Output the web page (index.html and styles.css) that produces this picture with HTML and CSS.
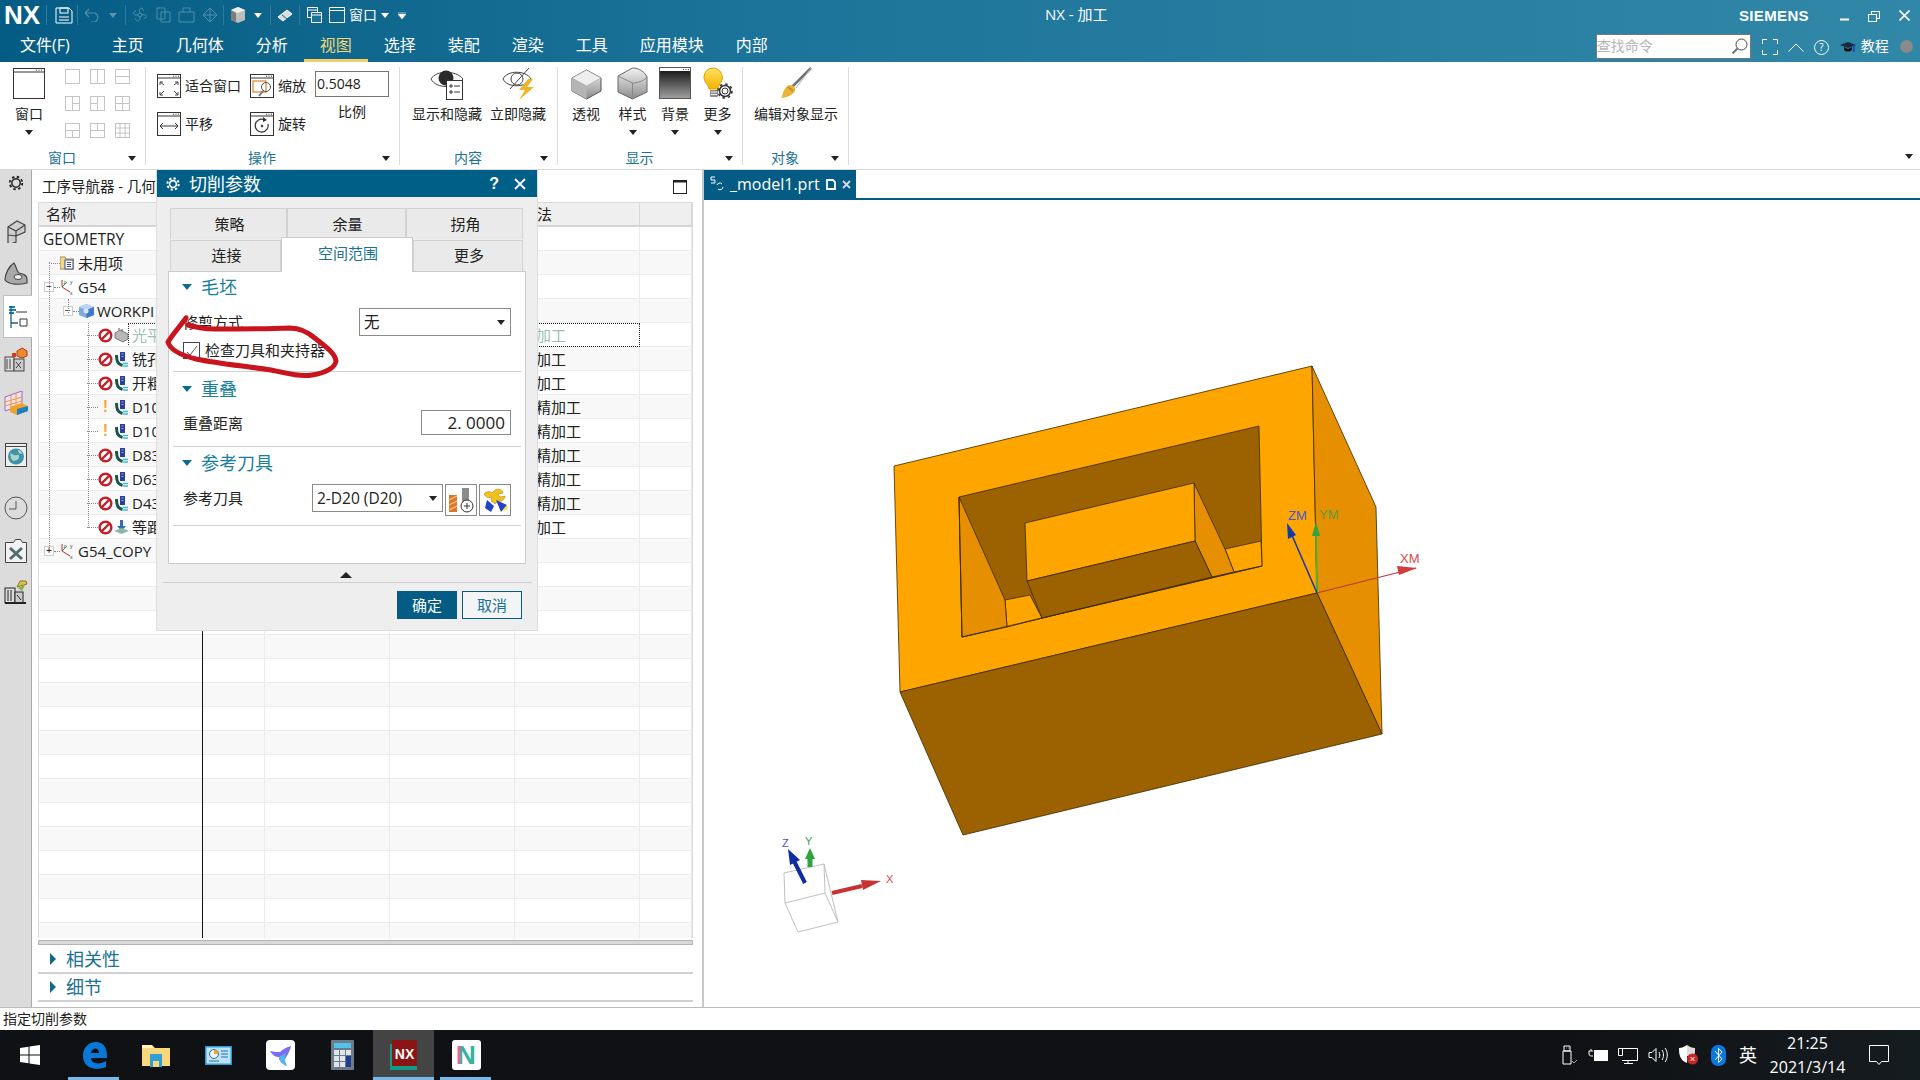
FILE: index.html
```html
<!DOCTYPE html>
<html lang="zh">
<head>
<meta charset="utf-8">
<title>NX - 加工</title>
<link rel="stylesheet" href="styles.css">
</head>
<body>
<svg class="defs" width="0" height="0" aria-hidden="true">
  <defs>
    <linearGradient id="gCube" x1="0" y1="0" x2="0" y2="1"><stop offset="0" stop-color="#f2f2f2"/><stop offset="1" stop-color="#8c8c8c"/></linearGradient>
    <linearGradient id="gBg" x1="0" y1="0" x2="0" y2="1"><stop offset="0" stop-color="#0b0b0b"/><stop offset="1" stop-color="#a0a0a0"/></linearGradient>
    <linearGradient id="gBulb" x1="0" y1="0" x2="0" y2="1"><stop offset="0" stop-color="#ffe060"/><stop offset="1" stop-color="#f5b400"/></linearGradient>
    <symbol id="frame" viewBox="0 0 24 24"><rect x=".5" y=".5" width="23" height="23" fill="#fff" stroke="#333"/><path d="M1 4h22" stroke="#333"/><path d="M16 2.2h1M18.500 2.200h1M21 2.200h1" stroke="#333"/></symbol>
    <symbol id="fit" viewBox="0 0 24 24"><use href="#frame"/><path d="M3 8l4 3M3 8v3M3 8h3M21 8l-4 3M21 8v3M21 8h-3M3 21l4-4M3 21v-3M3 21h3M21 21l-4-4M21 21v-3M21 21h-3" fill="none" stroke="#444"/></symbol>
    <symbol id="pan" viewBox="0 0 24 24"><use href="#frame"/><path d="M3 14h18M6 11l-3 3 3 3M18 11l3 3-3 3" fill="none" stroke="#333"/></symbol>
    <symbol id="zoomi" viewBox="0 0 24 24"><use href="#frame"/><rect x="3" y="7" width="13" height="11" fill="none" stroke="#d9822b" stroke-width="1.200"/><circle cx="16" cy="13" r="4.500" fill="none" stroke="#555"/><path d="M13 17l-4 5" stroke="#777" stroke-width="2"/></symbol>
    <symbol id="rot" viewBox="0 0 24 24"><use href="#frame"/><path d="M14 7.500A6.500 6.500 0 1 0 18 12" fill="none" stroke="#333" stroke-width="1.200"/><path d="M13 5l4 3-4 2z" fill="#333"/><circle cx="12" cy="14" r="1.200" fill="#333"/></symbol>
    <symbol id="s1" viewBox="0 0 15 15"><rect x=".5" y=".5" width="14" height="14" fill="none" stroke="#c4c4c4"/></symbol>
    <symbol id="s2" viewBox="0 0 15 15"><rect x=".5" y=".5" width="14" height="14" fill="none" stroke="#c4c4c4"/><path d="M7.500 0v15" stroke="#c4c4c4"/></symbol>
    <symbol id="s3" viewBox="0 0 15 15"><rect x=".5" y=".5" width="14" height="14" fill="none" stroke="#c4c4c4"/><path d="M0 7.500h15" stroke="#c4c4c4"/></symbol>
    <symbol id="s4" viewBox="0 0 15 15"><rect x=".5" y=".5" width="14" height="14" fill="none" stroke="#c4c4c4"/><path d="M7.500 0v15M7.500 7.500h7.500" stroke="#c4c4c4"/></symbol>
    <symbol id="s5" viewBox="0 0 15 15"><rect x=".5" y=".5" width="14" height="14" fill="none" stroke="#c4c4c4"/><path d="M7.500 0v15M0 7.500h7.500" stroke="#c4c4c4"/></symbol>
    <symbol id="s6" viewBox="0 0 15 15"><rect x=".5" y=".5" width="14" height="14" fill="none" stroke="#c4c4c4"/><path d="M7.500 0v15M0 7.500h15" stroke="#c4c4c4"/></symbol>
    <symbol id="s7" viewBox="0 0 15 15"><rect x=".5" y=".5" width="14" height="14" fill="none" stroke="#c4c4c4"/><path d="M7.500 7.500v7.500M0 7.500h15" stroke="#c4c4c4"/></symbol>
    <symbol id="s8" viewBox="0 0 15 15"><rect x=".5" y=".5" width="14" height="14" fill="none" stroke="#c4c4c4"/><path d="M7.500 0v7.500M0 7.500h15" stroke="#c4c4c4"/></symbol>
    <symbol id="s9" viewBox="0 0 15 15"><rect x=".5" y=".5" width="14" height="14" fill="none" stroke="#c4c4c4"/><path d="M5 0v15M10 0v15M0 5h15M0 10h15" stroke="#c4c4c4"/></symbol>
    <symbol id="ban" viewBox="0 0 15 15"><circle cx="7.500" cy="7.500" r="5.800" fill="#fff" stroke="#c02028" stroke-width="2.400"/><path d="M3.500 11.500l8-8" stroke="#c02028" stroke-width="2.400"/></symbol>
    <symbol id="op" viewBox="0 0 15 15"><path d="M2.500 3c0 6 1 9 6 10.500" fill="none" stroke="#17564f" stroke-width="3"/><rect x="6" y="0" width="5" height="9" fill="#2b3f9f"/><path d="M7.500 2h2M7.500 4.500h2" stroke="#8fa3e6"/><path d="M9 11.500h5M9 14h5" stroke="#3fb9d8" stroke-width="1.300"/></symbol>
    <symbol id="mcs" viewBox="0 0 14 16"><path d="M2 1v7l8 5" fill="none" stroke="#c62828"/><path d="M2 8l5-5" stroke="#2e9e44"/><text x="3.500" y="5" font-size="5" fill="#333">z</text><text x="10" y="5" font-size="5" fill="#333">y</text><text x="10" y="15.500" font-size="5" fill="#333">x</text></symbol>
  </defs>
</svg>

<div class="top">
  <div class="titlebar">
    <span class="logo">NX</span>
    <span class="qsep q1"></span>
    <svg class="q ql1" width="18" height="17" viewBox="0 0 18 17"><path d="M1 1h13l3 3v12H1z" fill="none" stroke="#fff"/><rect x="5" y="1" width="8" height="5" fill="none" stroke="#fff"/><path d="M4 10h10M4 13h10" stroke="#fff"/></svg>
    <span class="qsep"></span>
    <svg class="q ql2" width="17" height="14" viewBox="0 0 17 14"><path d="M1 5h10a5 5 0 0 1 0 9H7M1 5l4-4M1 5l4 4" fill="none" stroke="#4f8fa9" stroke-width="1.200"/></svg>
    <span class="dimcaret"></span>
    <span class="qsep"></span>
    <svg class="q ql3" width="16" height="16" viewBox="0 0 16 16"><circle cx="8" cy="8" r="2" fill="none" stroke="#4f8fa9"/><path d="M8 6c-3-5 4-7 3-2M10 8c5-2 6 4 2 3M8 10c1 5-6 5-4 1M6 8C1 9 0 4 4 4" fill="none" stroke="#4f8fa9"/></svg>
    <svg class="q ql4" width="15" height="16" viewBox="0 0 15 16"><path d="M1 1h8v11H1zM5 5h9v10H5z" fill="none" stroke="#4f8fa9"/></svg>
    <svg class="q ql5" width="17" height="16" viewBox="0 0 17 16"><path d="M1 5h15v10H1zM5 5V1h7v4" fill="none" stroke="#4f8fa9"/></svg>
    <svg class="q ql5" width="16" height="16" viewBox="0 0 16 16"><path d="M1 8l7-7 7 7-7 7zM8 1v14M1 8h14" fill="none" stroke="#4f8fa9"/></svg>
    <span class="qsep q4"></span>
    <svg class="q ql6" width="16" height="16" viewBox="0 0 16 16"><path d="M1 3l7-3 7 3v10l-7 3-7-3z" fill="#bdbdbd"/><path d="M1 3l7 3 7-3-7-3z" fill="#eee"/><path d="M1 3v10l5 2.500V6z" fill="#7d7d7d"/></svg>
    <span class="wcaret c1"></span>
    <span class="qsep q5"></span>
    <svg class="q ql7" width="16" height="14" viewBox="0 0 16 14"><path d="M1 9l9-7 5 4-9 7z" fill="#d8dfe4" stroke="#fff"/><path d="M5 7l5 4" stroke="#1f5f7f"/></svg>
    <span class="qsep q6"></span>
    <svg class="q ql8" width="15" height="16" viewBox="0 0 15 16"><path d="M.5 .5h10v10H.5zM.5 3h10" fill="none" stroke="#fff"/><path d="M4.500 5.500h10v10h-10zM4.500 8h10" fill="#17739a" stroke="#fff"/></svg>
    <svg class="q ql9" width="16" height="16" viewBox="0 0 16 16"><path d="M.5 .5h15v15H.5zM.5 3.500h15" fill="none" stroke="#fff"/></svg>
    <span class="qtext">窗口</span>
    <span class="wcaret c2"></span>
    <svg class="q ql10" width="8" height="7" viewBox="0 0 8 7"><path d="M0 0h8M0 2h8L4 7z" fill="#fff" stroke="#fff" stroke-width=".6"/></svg>
    <span class="wintitle">NX - 加工</span>
    <span class="siemens">SIEMENS</span>
    <svg class="wctl w1" width="9" height="3" viewBox="0 0 9 3"><path d="M0 1.500h9" stroke="#fff" stroke-width="2"/></svg>
    <svg class="wctl w2" width="12" height="11" viewBox="0 0 12 11"><path d="M.5 3.500h8v7h-8zM3.500 3V.5h8v7H9" fill="none" stroke="#fff" stroke-width="1.100"/></svg>
    <svg class="wctl w3" width="11" height="11" viewBox="0 0 11 11"><path d="M.5 .5l10 10M10.500 .5l-10 10" stroke="#fff" stroke-width="1.600"/></svg>
  </div>
  <div class="menubar">
    <span class="menu first">文件(F)</span>
    <span class="menu">主页</span>
    <span class="menu">几何体</span>
    <span class="menu">分析</span>
    <span class="menu on">视图</span>
    <span class="menu">选择</span>
    <span class="menu">装配</span>
    <span class="menu">渲染</span>
    <span class="menu">工具</span>
    <span class="menu">应用模块</span>
    <span class="menu">内部</span>
    <div class="search"><span>查找命令</span>
      <svg width="17" height="17" viewBox="0 0 17 17"><circle cx="10.500" cy="6.500" r="5.500" fill="none" stroke="#444"/><path d="M6.500 10.500L1.500 15.500" stroke="#777" stroke-width="2.200"/></svg>
    </div>
    <svg class="mi m1" width="16" height="16" viewBox="0 0 16 16"><path d="M.5 5V.5H5M11 .5h4.500V5M.5 11v4.500H5M11 15.500h4.500V11" fill="none" stroke="#fff"/></svg>
    <svg class="mi m2" width="16" height="9" viewBox="0 0 16 9"><path d="M.5 8.500L8 1l7.500 7.500" fill="none" stroke="#fff"/></svg>
    <svg class="mi m3" width="15" height="15" viewBox="0 0 15 15"><circle cx="7.500" cy="7.500" r="7" fill="none" stroke="#fff"/><text x="7.500" y="11" font-size="10" text-anchor="middle" fill="#fff">?</text></svg>
    <svg class="mi m4" width="16" height="11" viewBox="0 0 16 11"><path d="M0 3l8-3 8 3-8 3z" fill="#1b2a36"/><path d="M4 5v3c2 2 6 2 8 0V5L8 7z" fill="#0c1218"/><path d="M14 3v7" stroke="#1440c8" stroke-width="1.600"/></svg>
    <span class="tut">教程</span>
    <span class="dot"></span>
  </div>
</div>

<div class="ribbon">
  <section class="group g1">
    <div class="gbody wins">
      <div class="big w32">
        <svg width="32" height="33" viewBox="0 0 32 33"><rect x=".5" y="1.500" width="31" height="30" fill="#fff" stroke="#333"/><path d="M1 5h30" stroke="#333"/><path d="M23 3.200h1M25.500 3.200h1M28 3.200h1" stroke="#333"/></svg>
        <span>窗口</span><i class="caret"></i>
      </div>
      <div class="layouts">
        <svg><use href="#s1"/></svg><svg><use href="#s2"/></svg><svg><use href="#s3"/></svg>
        <svg><use href="#s4"/></svg><svg><use href="#s5"/></svg><svg><use href="#s6"/></svg>
        <svg><use href="#s7"/></svg><svg><use href="#s8"/></svg><svg><use href="#s9"/></svg>
      </div>
    </div>
    <footer class="gfoot"><span>窗口</span><i class="caret"></i></footer>
  </section>
  <section class="group g2">
    <div class="gbody ops">
      <div class="opcol c93">
        <div class="tool"><svg><use href="#fit"/></svg><span>适合窗口</span></div>
        <div class="tool"><svg><use href="#pan"/></svg><span>平移</span></div>
      </div>
      <div class="opcol c65">
        <div class="tool"><svg><use href="#zoomi"/></svg><span>缩放</span></div>
        <div class="tool"><svg><use href="#rot"/></svg><span>旋转</span></div>
      </div>
      <div class="scale"><div class="scalebox">0.5048</div><span>比例</span></div>
    </div>
    <footer class="gfoot"><span>操作</span><i class="caret"></i></footer>
  </section>
  <section class="group g3">
    <div class="gbody content">
      <div class="big w70">
        <svg width="34" height="33" viewBox="0 0 34 33"><path d="M1 12C6 3 26 3 33 12 26 22 6 22 1 12z" fill="#fff" stroke="#444"/><circle cx="16" cy="11" r="7.500" fill="#2b2b2b"/><rect x="16.500" y="13.500" width="16" height="19" fill="#fff" stroke="#333"/><path d="M20 18h2v2h-2zM20 24h2v2h-2zM24 19h6M24 25h6" fill="none" stroke="#333"/></svg>
        <span>显示和隐藏</span>
      </div>
      <div class="big w56">
        <svg width="33" height="33" viewBox="0 0 33 33"><path d="M1 12C5 3 24 3 29 12 24 21 5 21 1 12z" fill="none" stroke="#444"/><circle cx="15" cy="12" r="6" fill="none" stroke="#444"/><path d="M8 22L27 1" stroke="#444"/><path d="M26 12l-9 11h6l-6 10 15-13h-7l6-8z" fill="#f0b323"/></svg>
        <span>立即隐藏</span>
      </div>
    </div>
    <footer class="gfoot"><span>内容</span><i class="caret"></i></footer>
  </section>
  <section class="group g4">
    <div class="gbody display">
      <div class="big w28">
        <svg width="31" height="33" viewBox="0 0 31 33"><path d="M15.500 3L30 11v13l-14.500 8L1 24V11z" fill="url(#gCube)" stroke="#555"/><path d="M15.500 3L30 11l-14.500 8L1 11z" fill="#eee" stroke="#999" stroke-width=".5"/><path d="M15.500 19v13L1 24V11z" fill="#b5b5b5"/></svg>
        <span>透视</span>
      </div>
      <div class="big w28 style">
        <svg width="31" height="33" viewBox="0 0 31 33"><path d="M15.500 1C22 1 28 5 30 10v15l-14.500 7L1 25V9z" fill="url(#gCube)" stroke="#666"/><path d="M1 9l14.500 7V32" fill="none" stroke="#888"/><path d="M15.500 16C22 16 28 13 30 10" fill="none" stroke="#888"/></svg>
        <span>样式</span><i class="caret"></i>
      </div>
      <div class="big w28">
        <svg width="32" height="33" viewBox="0 0 32 33"><rect x=".5" y=".5" width="31" height="31" fill="url(#gBg)" stroke="#555"/><rect x="1" y="1" width="30" height="3" fill="#fff"/><path d="M24 2.500h1M26.500 2.500h1M29 2.500h1" stroke="#333"/></svg>
        <span>背景</span><i class="caret"></i>
      </div>
      <div class="big w28">
        <svg width="30" height="33" viewBox="0 0 30 33"><path d="M10 1a9.500 9.500 0 0 1 9 12c-1 3-4 5-4 9H6c0-4-5-6-5-12A9 9 0 0 1 10 1z" fill="url(#gBulb)" stroke="#d8a000"/><rect x="7" y="23" width="8" height="7" rx="1" fill="#8d8d8d"/><path d="M8 25h6M8 27.500h6" stroke="#eee"/><circle cx="22" cy="24" r="3" fill="#fff" stroke="#333"/><circle cx="22" cy="24" r="5.500" fill="none" stroke="#333" stroke-width="1.500"/><circle cx="22" cy="24" r="7" fill="none" stroke="#333" stroke-width="1.600" stroke-dasharray="2.500 3"/></svg>
        <span>更多</span><i class="caret"></i>
      </div>
    </div>
    <footer class="gfoot"><span>显示</span><i class="caret"></i></footer>
  </section>
  <section class="group g5">
    <div class="gbody object">
      <div class="big w84">
        <svg class="brush" width="32" height="33" viewBox="0 0 32 33"><path d="M31 1L12 20" stroke="#6f7376" stroke-width="2.500"/><path d="M31 1L16 21" stroke="#a9adb0" stroke-width="1"/><path d="M9 18c5 0 7 3 6 6-2 4-9 7-14 7 2-3 2-10 8-13z" fill="#eab53a"/><path d="M8 20l5 4" stroke="#c9921d" stroke-width="2"/></svg>
        <span>编辑对象显示</span>
      </div>
    </div>
    <footer class="gfoot"><span>对象</span><i class="caret"></i></footer>
  </section>
  <i class="caret endcaret"></i>
</div>

<div class="main">
  <aside class="sidebar">
    <div class="sitem gear"><svg width="16" height="16" viewBox="0 0 16 16"><circle cx="8" cy="8" r="4.200" fill="none" stroke="#222" stroke-width="1.500"/><circle cx="8" cy="8" r="6.300" fill="none" stroke="#222" stroke-width="1.800" stroke-dasharray="2.500 2.450"/></svg></div>
    <div class="sitem"><svg width="20" height="24" viewBox="0 0 20 24"><path d="M2 8l9-6 8 4v7l-9 4v6l-8 3z" fill="#cfcfcf" stroke="#444" stroke-width="1.200"/><path d="M2 8l8 4 9-6M10 12v5M2 16l8 1" fill="none" stroke="#444" stroke-width="1.200"/></svg></div>
    <div class="sitem"><svg width="24" height="24" viewBox="0 0 24 24"><path d="M1 18C1 12 5 4 10 1c3 4 2 8 5 10 4 1 8 2 8 6v4c-8 2-18 2-22-3z" fill="#a9a9a9" stroke="#444" stroke-width="1.200"/><ellipse cx="14" cy="15" rx="4" ry="2.500" fill="#eee" stroke="#444"/></svg></div>
    <div class="sitem sel"><svg width="20" height="24" viewBox="0 0 20 24"><path d="M1 1h6v2H1zM1 4h7v2H1zM1 7h5v2H1z" fill="#1a7fb5"/><path d="M3 1v22M3 18h7" fill="none" stroke="#1a5f86" stroke-width="1.300"/><path d="M8 7h11M12 14h7v7h-7z" fill="none" stroke="#333"/></svg></div>
    <div class="sitem"><svg width="24" height="25" viewBox="0 0 24 25"><rect x="1" y="10" width="9" height="14" fill="#ddd" stroke="#444"/><rect x="10" y="12" width="10" height="12" fill="#ccc" stroke="#444"/><path d="M3 12v10M6 12v10M12 15l5 6M17 15l-5 6" stroke="#444"/><path d="M13 4l5-3 5 3v5l-5 2-5-2z" fill="#e98b2e" stroke="#b23a1a"/><rect x="8" y="6" width="4" height="4" fill="#d73a20"/></svg></div>
    <div class="sitem"><svg width="24" height="24" viewBox="0 0 24 24"><path d="M1 6l17-6v14L1 20z" fill="#f2e1f2" stroke="#a36bb8"/><path d="M1 11l17-5M1 15l17-5M7 4v14M12 2v14" stroke="#e69a3d"/><path d="M6 16l11-4 7 3v5l-11 4-7-3z" fill="#f4a225"/><path d="M13 18l11-3v5l-11 4z" fill="#1980c8"/></svg></div>
    <div class="sitem web"><svg width="22" height="24" viewBox="0 0 22 24"><rect x=".5" y=".5" width="21" height="23" fill="#efefef" stroke="#444"/><path d="M1 3.500h20" stroke="#444"/><circle cx="11" cy="13.500" r="8" fill="#3f93a8"/><path d="M5 10c3 1 4 3 7 2s3 4 0 5-4 2-6-2zM13 7c2 0 4 1 4 4-2 0-4-1-4-4z" fill="#a9d6c9"/></svg></div>
    <div class="sitem clock"><svg width="24" height="24" viewBox="0 0 24 24"><circle cx="12" cy="12" r="11" fill="none" stroke="#555"/><path d="M12 5v8H5" fill="none" stroke="#555"/></svg></div>
    <div class="sitem tools"><svg width="22" height="24" viewBox="0 0 22 24"><path d="M.5 3.500h8l2-3h5l2 3h4v20H.5z" fill="#f2f2f2" stroke="#444"/><path d="M5 9l12 11M17 9L5 20" stroke="#4f6f6b" stroke-width="3"/></svg></div>
    <div class="sitem last"><svg width="24" height="26" viewBox="0 0 24 26"><rect x="1" y="8" width="10" height="15" fill="#ddd" stroke="#222"/><rect x="11" y="12" width="8" height="11" fill="#ccc" stroke="#222"/><path d="M4 10v11M7 10v11M13 15l4 5" stroke="#222"/><path d="M1 23h21" stroke="#222" stroke-width="2"/><path d="M13 7l3-6h6l1 3z" fill="#d8c14a" stroke="#8a7a1a"/><path d="M14 8l7-3-3 6z" fill="#7cb342"/></svg></div>
  </aside>

  <section class="panel">
    <header class="phead"><span>工序导航器 - 几何</span><svg width="14" height="14" viewBox="0 0 14 14"><rect x=".5" y=".5" width="13" height="13" fill="none" stroke="#222"/><path d="M0 1.500h14" stroke="#222" stroke-width="2"/></svg></header>
    <div class="table">
      <div class="row hdr"><div class="c">名称</div><div class="c"></div><div class="c"></div><div class="c m">方法</div><div class="c"></div></div>
      <div class="row"><div class="c name d0">GEOMETRY</div><div class="c"></div><div class="c"></div><div class="c"></div><div class="c"></div></div>
      <div class="row"><div class="c name d1"><i class="conn w10"></i><svg class="ti" width="14" height="14" viewBox="0 0 14 14"><path d="M0 1h5l1 2h8v10H0z" fill="#f5d98a" stroke="#a8894a"/><rect x="5" y="4" width="8" height="9" fill="#fff" stroke="#3a4a9a"/><path d="M7 6.500h4M7 8.500h4M7 10.500h4" stroke="#3a4a9a"/></svg><span>未用项</span></div><div class="c"></div><div class="c"></div><div class="c"></div><div class="c"></div></div>
      <div class="row"><div class="c name d2"><b class="box">−</b><i class="conn w6"></i><svg class="ti" width="14" height="16"><use href="#mcs"/></svg><span>G54</span></div><div class="c"></div><div class="c"></div><div class="c"></div><div class="c"></div></div>
      <div class="row"><div class="c name d3"><b class="box">−</b><i class="conn w6"></i><svg class="ti w15" width="15" height="14" viewBox="0 0 15 14"><path d="M7.500 0L15 3v8l-7.500 3L0 11V3z" fill="#7fa8e0"/><path d="M0 3l7.500 3L15 3 7.500 0z" fill="#bcd4f2"/><path d="M7.500 6v8L15 11V3z" fill="#3f78c8"/><circle cx="7" cy="7" r="2.500" fill="#d9e6f7"/></svg><span>WORKPI</span></div><div class="c"></div><div class="c"></div><div class="c"></div><div class="c"></div></div>
      <div class="row"><div class="c name d4 dim"><i class="conn w10"></i><svg class="tb"><use href="#ban"/></svg><svg class="ti2" width="15" height="15" viewBox="0 0 15 15"><path d="M1 5l5-3 8 4v5l-5 3-8-4z" fill="#b8b8b8" stroke="#777"/><path d="M5 2V0M8 3V1" stroke="#555"/></svg><span class="fx">光平</span></div><div class="c"></div><div class="c"></div><div class="c m fx2">加工</div><div class="c"></div></div>
      <div class="row"><div class="c name d4"><i class="conn w10"></i><svg class="tb"><use href="#ban"/></svg><svg class="ti2" width="15" height="15"><use href="#op"/></svg><span>铣孔</span></div><div class="c"></div><div class="c"></div><div class="c m">加工</div><div class="c"></div></div>
      <div class="row"><div class="c name d4"><i class="conn w10"></i><svg class="tb"><use href="#ban"/></svg><svg class="ti2" width="15" height="15"><use href="#op"/></svg><span>开粗</span></div><div class="c"></div><div class="c"></div><div class="c m">加工</div><div class="c"></div></div>
      <div class="row"><div class="c name d4"><i class="conn w10"></i><b class="warn">!</b><svg class="ti2" width="15" height="15"><use href="#op"/></svg><span>D10</span></div><div class="c"></div><div class="c"></div><div class="c m">精加工</div><div class="c"></div></div>
      <div class="row"><div class="c name d4"><i class="conn w10"></i><b class="warn">!</b><svg class="ti2" width="15" height="15"><use href="#op"/></svg><span>D10</span></div><div class="c"></div><div class="c"></div><div class="c m">精加工</div><div class="c"></div></div>
      <div class="row"><div class="c name d4"><i class="conn w10"></i><svg class="tb"><use href="#ban"/></svg><svg class="ti2" width="15" height="15"><use href="#op"/></svg><span>D83</span></div><div class="c"></div><div class="c"></div><div class="c m">精加工</div><div class="c"></div></div>
      <div class="row"><div class="c name d4"><i class="conn w10"></i><svg class="tb"><use href="#ban"/></svg><svg class="ti2" width="15" height="15"><use href="#op"/></svg><span>D63</span></div><div class="c"></div><div class="c"></div><div class="c m">精加工</div><div class="c"></div></div>
      <div class="row"><div class="c name d4"><i class="conn w10"></i><svg class="tb"><use href="#ban"/></svg><svg class="ti2" width="15" height="15"><use href="#op"/></svg><span>D43</span></div><div class="c"></div><div class="c"></div><div class="c m">精加工</div><div class="c"></div></div>
      <div class="row"><div class="c name d4"><i class="conn w10"></i><svg class="tb"><use href="#ban"/></svg><svg class="ti2" width="15" height="15" viewBox="0 0 15 15"><path d="M7.500 0v9" stroke="#2f6fb5" stroke-width="3"/><path d="M3 6l4.500 5L12 6z" fill="#2f6fb5"/><path d="M0 11l7.500-3 7.500 3-7.500 3z" fill="#8fb7a8"/></svg><span>等距</span></div><div class="c"></div><div class="c"></div><div class="c m">加工</div><div class="c"></div></div>
      <div class="row"><div class="c name d2"><b class="box">+</b><i class="conn w6"></i><svg class="ti" width="14" height="16"><use href="#mcs"/></svg><span>G54_COPY</span></div><div class="c"></div><div class="c"></div><div class="c"></div><div class="c"></div></div>
      <div class="row"><div class="c"></div><div class="c"></div><div class="c"></div><div class="c"></div><div class="c"></div></div>
      <div class="row"><div class="c"></div><div class="c"></div><div class="c"></div><div class="c"></div><div class="c"></div></div>
      <div class="row"><div class="c"></div><div class="c"></div><div class="c"></div><div class="c"></div><div class="c"></div></div>
      <div class="row"><div class="c"></div><div class="c"></div><div class="c"></div><div class="c"></div><div class="c"></div></div>
      <div class="row"><div class="c"></div><div class="c"></div><div class="c"></div><div class="c"></div><div class="c"></div></div>
      <div class="row"><div class="c"></div><div class="c"></div><div class="c"></div><div class="c"></div><div class="c"></div></div>
      <div class="row"><div class="c"></div><div class="c"></div><div class="c"></div><div class="c"></div><div class="c"></div></div>
      <div class="row"><div class="c"></div><div class="c"></div><div class="c"></div><div class="c"></div><div class="c"></div></div>
      <div class="row"><div class="c"></div><div class="c"></div><div class="c"></div><div class="c"></div><div class="c"></div></div>
      <div class="row"><div class="c"></div><div class="c"></div><div class="c"></div><div class="c"></div><div class="c"></div></div>
      <div class="row"><div class="c"></div><div class="c"></div><div class="c"></div><div class="c"></div><div class="c"></div></div>
      <div class="row"><div class="c"></div><div class="c"></div><div class="c"></div><div class="c"></div><div class="c"></div></div>
      <div class="row"><div class="c"></div><div class="c"></div><div class="c"></div><div class="c"></div><div class="c"></div></div>
      <div class="row"><div class="c"></div><div class="c"></div><div class="c"></div><div class="c"></div><div class="c"></div></div>
      <div class="row"><div class="c"></div><div class="c"></div><div class="c"></div><div class="c"></div><div class="c"></div></div>
      <div class="row"><div class="c"></div><div class="c"></div><div class="c"></div><div class="c"></div><div class="c"></div></div>
      <i class="vd v1"></i><i class="vd v2"></i><i class="vd v3"></i>
    </div>
    <div class="splitter"></div>
    <div class="fold"><i class="tri-r"></i><span>相关性</span></div>
    <div class="fold"><i class="tri-r"></i><span>细节</span></div>
  </section>

  <section class="gfx">
    <div class="tabstrip">
      <div class="ftab">
        <svg width="14" height="16" viewBox="0 0 14 16"><path d="M1 1h4M1 1v3h4v3H1M7 9a3 3 0 0 1 5-1M13 11a3 3 0 0 1-5 2" fill="none" stroke="#fff"/></svg>
        <span>_model1.prt</span>
        <svg class="fdoc" width="10" height="11" viewBox="0 0 10 11"><path d="M1 1h6l2 2v7H1z" fill="none" stroke="#fff" stroke-width="1.800"/></svg>
        <svg width="9" height="9" viewBox="0 0 9 9"><path d="M1 1l7 7M8 1L1 8" stroke="#cfdfe6" stroke-width="1.800"/></svg>
      </div>
    </div>
    <div class="canvas">
      <svg class="model" viewBox="704 200 1216 807" width="1216" height="807">
        <g stroke="#3a2a00" stroke-width=".8" stroke-linejoin="round">
          <path d="M894 466L1312 366L1317 593L900 692z" fill="#ffa500"/>
          <path d="M1312 366L1376 507L1382 734L1317 593z" fill="#e68f00"/>
          <path d="M900 692L1317 593L1382 734L963 835z" fill="#9c6100"/>
          <path d="M959 497L1259 426L1262 566L962 637z" fill="#9c6100"/>
          <path d="M1225 549L1261 541L1262 566L1234 572z" fill="#ffa500"/>
          <path d="M1005 600L1030 595L1042 618L1007 627z" fill="#ffa500"/>
          <path d="M959 497L1005 600L1007 627L962 637z" fill="#e68f00"/>
          <path d="M1194 483L1225 549L1234 572L1212 577L1195 541z" fill="#e68f00"/>
          <path d="M1025 523L1194 483L1195 541L1027 581z" fill="#ffa500"/>
          <path d="M1027 581L1195 541L1212 577L1042 618z" fill="#9c6100"/>
          <path d="M959 497L962 637L1262 566" fill="none"/>
        </g>
        <path d="M1317 593L1416 568" stroke="#b83a3a" stroke-width="1.200"/>
        <path d="M1417 568L1397 566L1399 575z" fill="#d23c3c"/>
        <path d="M1317 593L1316 535" stroke="#4caf3c" stroke-width="2"/>
        <path d="M1316 522L1312 536L1320 536z" fill="#2fa33f"/>
        <path d="M1317 593L1291 533" stroke="#1c3aa8" stroke-width="1.600"/>
        <path d="M1287 523L1288 539L1296 535z" fill="#1438a8"/>
        <text class="lbl" x="1288" y="520" fill="#4a55d8">ZM</text>
        <text class="lbl" x="1319" y="519" fill="#5f9a3f">YM</text>
        <text class="lbl" x="1400" y="563" fill="#d94a4a">XM</text>
        <path d="M784 873L824 864L838 922L798 932L785 903zM785 903L825 893L824 864M825 893L838 922" fill="none" stroke="#c0c0c0"/>
        <path d="M805 883L794 861" stroke="#0e2da0" stroke-width="4"/>
        <path d="M788 849L790 865L800 860z" fill="#0e2da0"/>
        <path d="M810 867V858" stroke="#2fa33f" stroke-width="5"/>
        <path d="M810 848L805 859H815z" fill="#2fa33f"/>
        <path d="M832 893L862 886" stroke="#c83232" stroke-width="4"/>
        <path d="M881 881L861 880L863 890z" fill="#c83232"/>
        <text class="lbl2" x="782" y="847" fill="#4a55d8">Z</text>
        <text class="lbl2" x="805" y="845" fill="#4f9a5f">Y</text>
        <text class="lbl2" x="886" y="883" fill="#d94a4a">X</text>
      </svg>
    </div>
  </section>

  <div class="dragline"></div>

  <div class="dialog">
    <div class="dtitle">
      <svg width="14" height="14" viewBox="0 0 14 14"><circle cx="7" cy="7" r="3.400" fill="none" stroke="#fff" stroke-width="1.700"/><circle cx="7" cy="7" r="5.700" fill="none" stroke="#fff" stroke-width="2" stroke-dasharray="2.300 2.150"/></svg>
      <span class="dname">切削参数</span>
      <span class="dq">?</span>
      <svg class="dx" width="12" height="12" viewBox="0 0 12 12"><path d="M1 1l10 10M11 1L1 11" stroke="#fff" stroke-width="1.800"/></svg>
    </div>
    <div class="tabs">
      <div class="trow r1"><span class="tab t117">策略</span><span class="tab t118">余量</span><span class="tab t117">拐角</span></div>
      <div class="trow r2"><span class="tab t111">连接</span><span class="tab active">空间范围</span><span class="tab t110">更多</span></div>
    </div>
    <div class="dbox">
      <div class="sec s1x">
        <div class="sech h30"><i class="tri-d"></i><span>毛坯</span></div>
        <div class="frow f1"><span>修剪方式</span><div class="pick w152"><span>无</span><i class="caret"></i></div></div>
        <div class="chk"><i class="cb"><svg width="15" height="15" viewBox="0 0 15 15"><path d="M3 9l3 3 7-9" fill="none" stroke="#555"/></svg></i><span>检查刀具和夹持器</span></div>
      </div>
      <div class="sec s2x">
        <div class="sech"><i class="tri-d"></i><span>重叠</span></div>
        <div class="frow f2"><span>重叠距离</span><div class="num">2. 0000</div></div>
      </div>
      <div class="sec s3x">
        <div class="sech h32"><i class="tri-d"></i><span>参考刀具</span></div>
        <div class="frow f3"><span>参考刀具</span>
          <div class="picks">
            <div class="pick w131"><span>2-D20 (D20)</span><i class="caret"></i></div>
            <button class="ib"><svg width="28" height="28" viewBox="0 0 28 28"><rect x="2" y="9" width="8" height="17" fill="#d8772a"/><path d="M2 14l8-4M2 19l8-4M2 24l8-4" stroke="#f3b36b" stroke-width="1.500"/><rect x="15" y="2" width="7" height="15" fill="#8b8b8b"/><circle cx="20" cy="20" r="6" fill="#fff" stroke="#333"/><path d="M17 20h6M20 17v6" stroke="#333"/></svg></button>
            <button class="ib"><svg width="28" height="28" viewBox="0 0 28 28"><path d="M3 8c3-3 6-3 8-1l3-3c3-2 8 0 8 3l-5 1 2 3 5-1c0 4-4 6-7 5l-3 3-4-3 1-4C8 12 5 12 3 8z" fill="#f2c21b" stroke="#a67c00" stroke-width=".5"/><path d="M6 14l7 6-3 6-6-4zM15 14l11 5-6 7z" fill="#1f42c8"/><path d="M20 26l6-7 1 4z" fill="#f5e04a"/></svg></button>
          </div>
        </div>
      </div>
    </div>
    <div class="collapse"><i class="tri-u"></i></div>
    <div class="dbtns"><button class="btn ok">确定</button><button class="btn">取消</button></div>
  </div>

  <svg class="redmark" viewBox="160 312 182 70" width="182" height="70"><path d="M186 318C181 325 172 335 168 342C170 350 180 355 196 359C220 364 245 366 271 370C285 373 300 377 312 375C325 373 335 368 336 361C335 353 326 347 316 339C308 332 300 328 290 328C265 329 240 329 214 329C204 329 195 327 188 325" fill="none" stroke="#c8141c" stroke-width="5" stroke-linecap="round" stroke-linejoin="round"/></svg>
</div>

<div class="status">指定切削参数</div>

<div class="taskbar">
  <div class="start"><svg width="20" height="20" viewBox="0 0 20 20"><path d="M0 3l8.500-1.300v7.700H0zM9.500 1.500L20 0v9.400H9.500zM0 10.500h8.500v7.800L0 17zM9.500 10.500H20V20L9.500 18.500z" fill="#fff"/></svg></div>
  <div class="slot run"><svg width="25" height="27" viewBox="0 0 25 27"><path d="M1 14C1 5 7 0 14 0c7 0 11 5 11 14v2H9c0 6 9 7 15 3v6c-9 4-23 2-23-11zM9 11h8c0-6-7-6-8 0z" fill="#0a78d7"/></svg></div>
  <div class="slot"><svg width="28" height="24" viewBox="0 0 28 24"><path d="M0 2h10l3 3h15v18H0z" fill="#f7d67c"/><path d="M0 2h10l1 3H0z" fill="#fff1c4"/><rect x="8" y="11" width="12" height="13" fill="#2e9fd8"/><rect x="11" y="18" width="6" height="6" fill="#f7d67c"/></svg></div>
  <div class="slot"><svg width="27" height="19" viewBox="0 0 27 19"><rect width="27" height="19" fill="#2b9bd8"/><rect x="1.500" y="1.500" width="24" height="16" fill="#bfe4f7"/><circle cx="9" cy="8" r="4.500" fill="#f2f2f2" stroke="#2470a8"/><path d="M9 8V3.500A4.500 4.500 0 0 1 13.500 8z" fill="#e8a33d"/><path d="M16 5h7M16 8h7M16 11h7M4 15h10" stroke="#2470a8"/></svg></div>
  <div class="slot"><svg width="29" height="30" viewBox="0 0 29 30"><rect width="29" height="30" rx="4" fill="#fff"/><path d="M25 6c-1 6-5 11-7 15l3 5c-5-2-8-5-8-9-3 0-6-1-9-6 4 1 7 1 10 1 3-3 7-5 11-6z" fill="#7b6df2"/><path d="M21 26c-5-2-8-5-8-9l7-4c-2 4-1 9 1 13z" fill="#52b5f0"/></svg></div>
  <div class="slot"><svg width="23" height="30" viewBox="0 0 23 30"><rect width="23" height="30" rx="1" fill="#6c7a89"/><rect x="3" y="3" width="17" height="5" fill="#4fc4ea"/><path d="M3 10h5v5H3zM9 10h5v5H9zM15 10h5v5h-5zM3 16h5v5H3zM9 16h5v5H9zM3 22h5v5H3zM9 22h5v5H9z" fill="#dfe5ea"/><rect x="15" y="16" width="5" height="11" fill="#1c3f8f"/></svg></div>
  <div class="slot cur"><svg width="27" height="30" viewBox="0 0 27 30"><path d="M0 4h4v22h23v4H0z" fill="#0f9a8a"/><rect x="2" y="0" width="25" height="26" fill="#8b1414"/><text x="14.500" y="19" font-size="14" font-weight="700" font-family="Liberation Sans" text-anchor="middle" fill="#fff">NX</text></svg></div>
  <div class="slot run"><svg width="29" height="30" viewBox="0 0 29 30"><rect width="29" height="30" rx="3" fill="#fff"/><text x="14.500" y="24" font-size="26" font-weight="700" font-family="Liberation Sans" text-anchor="middle" fill="#38b2a0">N</text><path d="M7 6v18" stroke="#e86a8a" stroke-width="3"/></svg></div>
  <div class="tray">
    <svg width="15" height="20" viewBox="0 0 15 20"><path d="M1 6h8v13H1zM2 1h6v5H2zM4 3h.5M6 3h.5" fill="none" stroke="#fff"/><path d="M10 16l2 2 3-3" fill="none" stroke="#aaa"/></svg>
    <svg class="t1" width="20" height="14" viewBox="0 0 20 14"><rect x="6.500" y="2.500" width="13" height="10" fill="#fff" stroke="#fff"/><path d="M1 3h4M3 1v2M1 3v3c0 2 2 2 4 2" fill="none" stroke="#fff"/></svg>
    <svg class="t0" width="20" height="17" viewBox="0 0 20 17"><path d="M4 1.500h15.500v12H4M10 14v2.500M6 16.500h9M.5 1.500h4v7h-4z" fill="none" stroke="#fff"/></svg>
    <svg class="t0" width="20" height="16" viewBox="0 0 20 16"><path d="M1 5.500h3l4-4v13l-4-4H1zM11 5c1 2 1 4 0 6M14 3c2 3 2 7 0 10M17 1c3 4 3 10 0 14" fill="none" stroke="#fff"/></svg>
    <svg class="t1" width="19" height="20" viewBox="0 0 19 20"><path d="M8 0C5 2 3 3 0 3c0 7 1 12 8 15z" fill="#fff"/><path d="M8 0c3 2 5 3 8 3 0 4 0 6-1 8H8z" fill="#fff" opacity=".85"/><circle cx="13.500" cy="14" r="5.500" fill="#c62828"/><path d="M11.500 12l4 4M15.500 12l-4 4" stroke="#fff"/></svg>
    <svg class="t3" width="15" height="21" viewBox="0 0 15 21"><rect width="15" height="21" rx="7" fill="#0a78e0"/><path d="M4 6l7 8-3.500 3.500v-14L11 7l-7 8" fill="none" stroke="#fff"/></svg>
    <span class="ime">英</span>
    <div class="clockt"><span>21:25</span><span>2021/3/14</span></div>
    <svg class="notif" width="20" height="20" viewBox="0 0 20 20"><path d="M.5 .5h19v16h-7l-2.500 3-2.500-3h-7z" fill="none" stroke="#fff"/></svg>
  </div>
</div>
</body>
</html>
```
FILE: styles.css
```css
*{box-sizing:border-box}
html,body{margin:0;padding:0}
body{width:1920px;height:1080px;overflow:hidden;display:flex;flex-direction:column;background:#fff;font:14px/16px "Open Sans","Noto Sans CJK SC",sans-serif;color:#222}
i{display:block;font-style:normal}
svg{display:block;flex:none}
.defs{position:absolute}

.top{height:62px;background:linear-gradient(90deg,#045c84,#1d749a 40%,#3087a7);color:#fff;flex:none}
.titlebar{height:30px;display:flex;align-items:center;position:relative}
.logo{font:700 26px/30px "Liberation Sans",sans-serif;margin-left:4px;width:37px}
.qsep{width:1px;height:20px;background:#2d7a9c;margin-left:0}
.q1{margin-left:5px}
.q{margin-left:0}
.ql1{margin:0 4px 0 8px}
.ql2{margin:0 0 0 6px}
.dimcaret{width:0;height:0;border:4px solid transparent;border-top:5px solid #5a95ac;border-bottom:0;margin:0 8px 0 8px}
.ql3{margin:0 0 0 6px}
.ql4{margin:0 0 0 8px}
.ql5{margin:0 0 0 7px}
.q4{margin-left:5px}
.ql6{margin-left:6px}
.wcaret{width:0;height:0;border:4px solid transparent;border-top:5px solid #fff;border-bottom:0}
.c1{margin:0 8px 0 8px}
.q5{margin-left:0}
.ql7{margin-left:6px}
.q6{margin-left:6px}
.ql8{margin-left:7px}
.ql9{margin-left:7px}
.qtext{margin-left:4px;width:28px}
.c2{margin-left:4px}
.ql10{margin-left:9px}
.wintitle{position:absolute;left:1045px;top:6px;font-size:15px}
.siemens{font:700 15px/30px "Liberation Sans",sans-serif;letter-spacing:.35px;position:absolute;left:1739px;top:1px}
.wctl{position:absolute}
.w1{left:1840px;top:18px}
.w2{left:1868px;top:11px}
.w3{left:1899px;top:10px}

.menubar{height:32px;display:flex;align-items:center;font-size:16px;position:relative}
.menu{padding:0 16px;height:32px;line-height:31px}
.first{padding:0 26px 0 20px}
.on{color:#f4d774;position:relative}
.on::after{content:"";position:absolute;left:0;right:0;bottom:0;height:3px;background:#f2cf66}
.search{margin-left:812px;width:155px;height:25px;background:#fff;color:#b5b5b5;font-size:14px;display:flex;align-items:center;justify-content:space-between;padding-right:2px;border:1px solid #777}
.mi{margin-top:2px}
.m1{margin-left:11px}
.m2{margin-left:10px}
.m3{margin-left:10px}
.m4{margin-left:11px}
.tut{font-size:14px;margin-left:5px}
.dot{width:13px;height:13px;border-radius:50%;background:#8a8a8a;margin-left:11px}

.ribbon{height:108px;flex:none;display:flex;border-bottom:1px solid #d8d8d8;background:#fff;position:relative}
.group{display:flex;flex-direction:column;margin:5px 0 4px;border-right:1px solid #dcdcdc;flex:none}
.g1{width:146px}.g2{width:254px}.g3{width:158px}.g4{width:185px}.g5{width:106px}
.gbody{flex:1;min-height:0;display:flex;align-items:flex-start}
.gfoot{height:16px;margin-bottom:-1px;display:flex;align-items:center;color:#1a7296;flex:none}
.gfoot span{flex:1;text-align:center;padding-left:5px}
.gfoot .caret{margin:0 9px 0 9px}
.caret{width:0;height:0;border:4px solid transparent;border-top:5px solid #222;border-bottom:0;flex:none}
.endcaret{position:absolute;left:1905px;top:92px}
.big{display:flex;flex-direction:column;align-items:center;flex:none}
.big>span{margin-top:6px;line-height:16px;white-space:nowrap}
.big>.caret{margin-top:8px}
.w32{width:32px}.w70{width:70px}.w56{width:56px}.w28{width:28px}.w84{width:84px}
.wins{padding-left:13px;gap:20px}
.layouts{display:grid;grid-template-columns:repeat(3,15px);grid-auto-rows:15px;column-gap:10px;row-gap:12px;margin-top:2px}
.layouts svg{width:15px;height:15px}
.ops{padding:7px 0 0 11px}
.opcol{display:flex;flex-direction:column;gap:14px}
.c93{width:93px}.c65{width:65px}
.tool{display:flex;align-items:center;gap:4px;height:24px}
.tool svg{width:24px;height:24px}
.scale{display:flex;flex-direction:column;align-items:center;margin-top:-3px;width:74px}
.scalebox{width:74px;height:26px;border:1px solid #777;line-height:24px;padding-left:1px;font-size:14px}
.scale span{margin-top:7px}
.content{padding-left:12px;gap:8px}
.display{padding-left:14px;gap:14.500px}
.style{margin-left:4px}
.object{padding-left:11px}

.main{flex:1;display:flex;position:relative;min-height:0}
.sidebar{width:32px;flex:none;background:#dcdcdc;border-right:1px solid #a9a9a9;display:flex;flex-direction:column}
.sitem{height:43px;display:flex;align-items:center;justify-content:center;flex:none}
.gear{height:26px;margin-bottom:13px}
.sel{background:#fff;margin:0 -1px 0 3px;border:1px solid #c0c0c0;border-right:0;padding:0}
.web{margin-top:9px}
.clock{margin-top:10px}
.tools{margin-top:0}
.last{margin-top:-1px}

.panel{width:672px;flex:none;border-right:2px solid #c9c9c9;display:flex;flex-direction:column;background:#fff;padding-left:6px}
.phead{height:32px;display:flex;align-items:center;padding:2px 15px 0 4px;justify-content:space-between;font-size:14.500px}
.table{width:655px;height:736px;overflow:hidden;position:relative;border:1px solid #dadada;border-bottom:0;flex:none}
.row{display:grid;grid-template-columns:226px 125px 125px 125px 52px;height:24px}
.row:nth-child(odd){background:#f8f8f8}
.row.hdr{background:#efefef;border-bottom:2px solid #d4d4d4}
.hdr .c:first-child{padding-left:7px}
.c{border-right:1px solid #ececec;border-bottom:1px solid #ececec;line-height:23px;white-space:nowrap;overflow:hidden;font-size:15px}
.hdr .c{border-bottom:0;border-right-color:#d8d8d8}
.c.m{padding-left:21px;padding-top:1px}
.hdr .c.m{padding-left:7px;padding-top:0}
.name{display:flex;align-items:center;padding-top:1px}
.d0{padding-left:4px;font-size:15.500px}
.d1{padding-left:10px}
.d2{padding-left:5px}
.d3{padding-left:24px}
.d4{padding-left:48px}
.box{width:10px;height:10px;border:1px solid #ccc;font:400 10px/8px "Liberation Sans",sans-serif;text-align:center;flex:none;background:#fff;color:#222}
.conn{height:0;border-top:1px dotted #888;flex:none}
.w10{width:11px}
.w6{width:6px}
.ti{margin-right:4px}
.w15{margin-right:3px}
.tb{width:15px;height:15px}
.ti2{margin:0 3px 0 1px}
.warn{width:15px;text-align:center;color:#f2a93b;font:700 16px/20px "Liberation Sans",sans-serif}
.dim{color:#9bbfb5}
.fx{outline:1px dotted #333;margin-left:-3px;padding:0 30px 0 3px;line-height:22px}
.fx2{color:#9bbfb5;outline:1px dotted #222;outline-offset:-1px}
.vd{position:absolute;width:0;border-left:1px dotted #888}
.v1{left:10px;top:59px;height:290px}
.v2{left:29px;top:96px;height:14px}
.v3{left:49px;top:120px;height:205px}
.splitter{width:655px;height:5px;margin:2px 0 0 0;border:1px solid #b5b5b5;background:#d9d9d9;flex:none}
.fold{height:29px;width:655px;display:flex;align-items:center;gap:10px;padding-left:12px;border-bottom:2px solid #d0d0d0;color:#1a7296;font-size:18px;line-height:24px;flex:none}
.fold+.fold{height:28px}
.tri-r{width:0;height:0;border:6px solid transparent;border-left:6px solid #0d6a8e;border-right:0}

.gfx{flex:1;display:flex;flex-direction:column;min-width:0}
.tabstrip{height:30px;border-bottom:2px solid #045c84;flex:none}
.ftab{width:152px;height:28px;background:#045c84;color:#fff;display:flex;align-items:center;padding-left:6px;font-size:16px}
.ftab span{margin:0 6px 0 6px}
.ftab .fdoc{margin-right:6px}
.canvas{flex:1;position:relative}
.model{position:absolute;left:0;top:0}
.lbl{font:13px "Liberation Sans",sans-serif}
.lbl2{font:11px "Liberation Sans",sans-serif}

.dragline{position:absolute;left:202px;top:460px;width:1px;height:308px;background:#111}

.dialog{position:absolute;left:157px;top:0;width:380px;height:460px;background:#eee;box-shadow:0 0 0 1px #ddd;display:flex;flex-direction:column;font-size:15px}
.dtitle{height:27px;background:#005f87;color:#fff;display:flex;align-items:center;padding-left:9px;flex:none}
.dname{font-size:18px;margin-left:9px;flex:1}
.dq{font:700 16px/20px "Liberation Sans",sans-serif;margin-right:15px;padding-left:2px}
.dx{margin-right:11px}
.tabs{margin:11px 0 0 13px;width:353px;flex:none}
.trow{display:flex;height:31px;align-items:flex-end}
.r2{height:32px}
.tab{height:31px;background:#eaeaea;border:1px solid #d2d2d2;border-bottom:0;text-align:center;line-height:30px;flex:none;padding-left:2px}
.r2 .tab{line-height:28px}
.t117{width:117px}.t118{width:119px}.t111{width:111px}.t110{width:110px}
.r2 .active{width:132px;height:35px;background:#fff;color:#1a7296;margin-bottom:-1px;position:relative;z-index:1;border-color:#ccc;line-height:30px}
.dbox{margin-left:11px;width:358px;height:293px;background:#fff;border:1px solid #cacaca;flex:none;padding:0 4px}
.sec{border-bottom:1px solid #d0d0d0}
.s1x{height:100px}
.s2x{height:75px}
.s3x{height:79px}
.sech{height:34px;display:flex;align-items:center;gap:9px;padding-left:9px;color:#1a7f9f;font-size:18px}
.h30{height:30px}
.h32{height:32px}
.tri-d{width:0;height:0;border:5px solid transparent;border-top:6px solid #0d6a8e;border-bottom:0}
.frow{display:flex;justify-content:space-between;align-items:center;padding:0 10px}
.f1{height:28px;margin-top:6px}
.f2{height:25px;margin-top:4px}
.f3{height:32px;margin-top:5px;align-items:flex-start}
.f3>span{line-height:28px}
.pick{height:28px;border:1px solid #8a8a8a;background:#fff;display:flex;align-items:center;justify-content:space-between;padding:0 5px 0 4px;font-size:15.500px}
.w152{width:152px}
.w131{width:131px}
.chk{display:flex;align-items:center;gap:5px;margin:6px 0 0 10px;height:17px}
.chk span{margin-top:-1px}
.cb{width:17px;height:17px;border:1px solid #444;background:#fff}
.num{width:90px;height:25px;border:1px solid #8a8a8a;text-align:right;padding-right:5px;line-height:23px;font-size:17px}
.picks{display:flex;gap:2px}
.ib{width:32px;height:32px;padding:1px;border:1px solid #8a8a8a;background:#fff;margin:0}
.collapse{height:19px;padding-top:3px;margin:0 5px 0 6px;border-bottom:1px solid #cfcfcf;display:flex;align-items:center;justify-content:center;flex:none}
.tri-u{width:0;height:0;border:6px solid transparent;border-bottom:6px solid #222;border-top:0;margin-right:4px}
.dbtns{display:flex;justify-content:flex-end;gap:5px;padding:8px 15px 0 0}
.btn{width:60px;height:28px;border:1px solid #045c84;background:#f2f4f5;color:#1a7296;font:15px/16px "Open Sans","Noto Sans CJK SC",sans-serif;padding:0}
.ok{background:#045c84;color:#fff}
.redmark{position:absolute;left:160px;top:142px}

.status{height:23px;flex:none;background:#fff;border-top:1px solid #bbb;padding-left:3px;line-height:22px;font-size:14px}
.taskbar{height:50px;flex:none;background:#101114;display:flex;color:#fff}
.start{width:63px;display:flex;align-items:center;justify-content:center;padding-right:4px}
.slot{width:62px;display:flex;align-items:center;justify-content:center;position:relative}
.run::after{content:"";position:absolute;left:5px;right:6px;bottom:0;height:3px;background:#76b9ed}
.cur{background:#444;width:61px;margin-right:1px}
.cur::after{content:"";position:absolute;left:0;right:0;bottom:0;height:3px;background:#76b9ed}
.tray{margin-left:auto;display:flex;align-items:center;padding-right:31px;gap:10px;background:linear-gradient(90deg,#101114,#151c20)}
.t1{margin-left:1px}
.t3{margin-left:3px}
.ime{font-size:18px;line-height:20px;margin-left:3px}
.clockt{display:flex;flex-direction:column;align-items:center;width:75px;margin-left:3px;font-size:16px;line-height:24px;margin-right:14px}
```
